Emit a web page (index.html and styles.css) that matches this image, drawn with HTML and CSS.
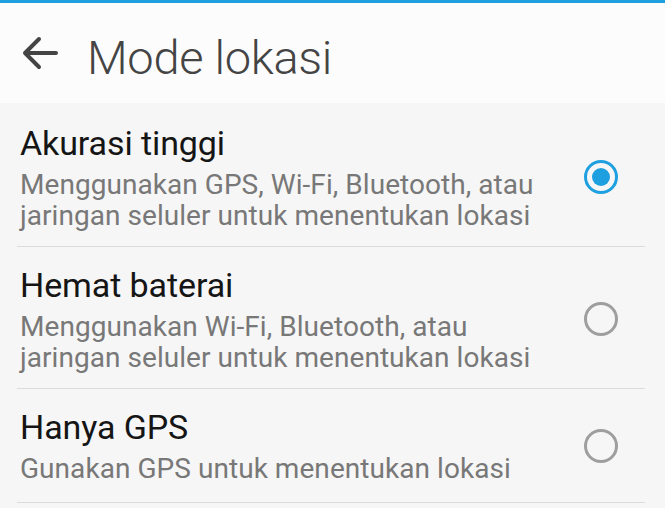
FILE: index.html
```html
<!DOCTYPE html>
<html>
<head>
<meta charset="utf-8">
<link rel="stylesheet" href="styles.css">
</head>
<body>
<div class="screen">
  <div class="topline"></div>
  <header class="appbar">
    <svg class="back" width="40" height="40" viewBox="0 0 40 40">
      <path d="M36 20H5M19 6L5 20L19 34" fill="none" stroke="#444" stroke-width="4" stroke-linecap="round" stroke-linejoin="round"/>
    </svg>
    <h1 class="title">Mode lokasi</h1>
  </header>
  <ul class="list">
    <li class="item">
      <div class="text">
        <div class="primary">Akurasi tinggi</div>
        <div class="secondary">Menggunakan GPS, Wi-Fi, Bluetooth, atau jaringan seluler untuk menentukan lokasi</div>
      </div>
      <span class="radio checked"></span>
    </li>
    <li class="item">
      <div class="text">
        <div class="primary">Hemat baterai</div>
        <div class="secondary">Menggunakan Wi-Fi, Bluetooth, atau jaringan seluler untuk menentukan lokasi</div>
      </div>
      <span class="radio"></span>
    </li>
    <li class="item last">
      <div class="text">
        <div class="primary">Hanya GPS</div>
        <div class="secondary">Gunakan GPS untuk menentukan lokasi</div>
      </div>
      <span class="radio"></span>
    </li>
  </ul>
</div>
</body>
</html>
```
FILE: styles.css
```css
html, body {
  margin: 0;
  padding: 0;
}
body {
  width: 665px;
  height: 508px;
  overflow: hidden;
  background: #f6f6f6;
  font-family: Roboto, "Liberation Sans", sans-serif;
}
.screen {
  display: flex;
  flex-direction: column;
}
.topline {
  height: 3px;
  background: #1ea0e0;
}
.appbar {
  height: 100px;
  background: #fcfcfc;
  display: flex;
  align-items: center;
  padding-left: 20px;
  box-sizing: border-box;
}
.back {
  display: block;
}
.title {
  margin: 8px 0 0 27px;
  font-weight: 300;
  font-size: 47px;
  color: #444;
  letter-spacing: -0.3px;
  line-height: 1;
}
.list {
  list-style: none;
  margin: 0;
  padding: 2px 20px 0 17px;
}
.item {
  display: flex;
  align-items: center;
  justify-content: space-between;
  padding: 18px 0 15px 3px;
  border-bottom: 1px solid #dcdcdc;
}
.item.last {
  padding-bottom: 18px;
}
.text {
  width: 540px;
}
.primary {
  font-size: 34px;
  line-height: 40px;
  color: #151515;
  letter-spacing: -0.1px;
}
.secondary {
  margin-top: 6px;
  font-size: 28px;
  line-height: 31px;
  color: #787878;
  letter-spacing: 0.05px;
}
.radio {
  width: 28px;
  height: 28px;
  border: 3px solid #9e9e9e;
  border-radius: 50%;
  margin-right: 27px;
  box-sizing: content-box;
  display: flex;
  align-items: center;
  justify-content: center;
  flex: none;
}
.radio.checked {
  border-color: #1ea0e0;
  border-width: 3.5px;
}
.radio.checked::after {
  content: "";
  width: 18px;
  height: 18px;
  border-radius: 50%;
  background: #1ea0e0;
}
```
